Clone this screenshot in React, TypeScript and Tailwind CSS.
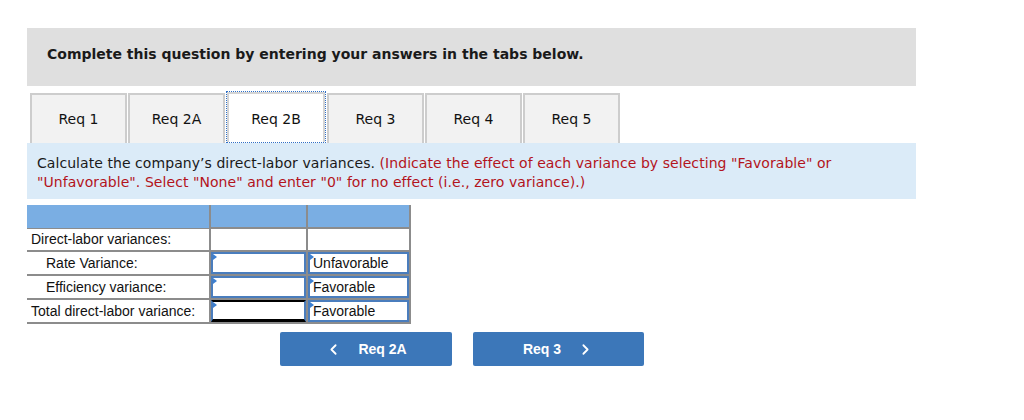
import { ChevronLeft, ChevronRight } from "lucide-react";

const tabs = ["Req 1", "Req 2A", "Req 2B", "Req 3", "Req 4", "Req 5"];
const ACTIVE = 2;

const rows = [
  { label: "Direct-labor variances:", indent: false, kind: "plain" as const },
  { label: "Rate Variance:", indent: true, kind: "input" as const, effect: "Unfavorable" },
  { label: "Efficiency variance:", indent: true, kind: "input" as const, effect: "Favorable" },
  { label: "Total direct-labor variance:", indent: false, kind: "total" as const, effect: "Favorable" },
];

function Flag() {
  return (
    <span className="absolute left-0 top-0 w-0 h-0 border-y-[3px] border-y-transparent border-l-[4px] border-l-[#3c7fd0]" />
  );
}

export default function App() {
  return (
    <div className="w-[1024px] h-[420px] bg-white pl-[27px] pt-[28px] font-['DejaVu_Sans',Verdana,sans-serif]">
      <div className="w-[889px]">
        {/* question header */}
        <div className="h-[58px] bg-[#dfdfdf] flex items-center pl-5 pb-[5px]">
          <p className="text-[14px] font-bold text-[#1a1a1a]">
            Complete this question by entering your answers in the tabs below.
          </p>
        </div>

        {/* tabs */}
        <div className="flex items-end gap-[1px] ml-[3px] mt-[5px] h-[52px]">
          {tabs.map((t, i) =>
            i === ACTIVE ? (
              <div
                key={t}
                className="w-[100px] h-[52px] bg-white border border-dotted border-[#2f6fc6] text-[14px] text-[#111]"
              >
                <div className="w-full h-full border-x-2 border-t-2 border-[#d4d4d4] flex items-center justify-center pt-[3px]">
                  {t}
                </div>
              </div>
            ) : (
              <div
                key={t}
                className="w-[97px] h-[50px] bg-[#f2f2f2] border-x-2 border-t-2 border-[#cdcdcd] flex items-center justify-center text-[14px] text-[#111]"
              >
                {t}
              </div>
            ),
          )}
        </div>

        {/* instructions */}
        <div className="bg-[#dbebf8] pl-[10px] pr-4 pt-[11px] pb-[7px] text-[14px] leading-[19px] tracking-[0.06px] text-[#1a1a1a]">
          Calculate the company’s direct-labor variances.{" "}
          <span className="text-[#b3141c]">
            (Indicate the effect of each variance by selecting "Favorable" or "Unfavorable". Select "None" and
            enter "0" for no effect (i.e., zero variance).)
          </span>
        </div>

        {/* table */}
        <table className="mt-[6px] border-collapse font-['Liberation_Sans',Arial,sans-serif] text-[14px] text-[#111]">
          <tbody>
            <tr className="h-[23px] bg-[#7aaee3]">
              <td className="w-[183px] p-0" />
              <td className="w-[97px] p-0 border-x-2 border-[#8c8c8c]" />
              <td className="w-[103px] p-0 border-r-2 border-[#8c8c8c]" />
            </tr>
            {rows.map((r) => (
              <tr key={r.label} className="h-[23px] border-b-2 border-[#8c8c8c]">
                <td className={`p-0 leading-[20px] border-t border-[#8c8c8c] ${r.indent ? "pl-[19px]" : "pl-[4px]"}`}>{r.label}</td>
                {r.kind === "plain" ? (
                  <>
                    <td className="p-0 border-x-2 border-t-2 border-[#8c8c8c]" />
                    <td className="p-0 border-r-2 border-t-2 border-[#8c8c8c]" />
                  </>
                ) : (
                  <>
                    <td className="p-0 border-x-2 border-[#8c8c8c]">
                      <div
                        className={`relative h-[22px] border-2 border-[#4a7dbd] bg-white ${
                          r.kind === "total" ? "border-t-black border-b-[3px] border-b-black" : ""
                        }`}
                      >
                        <Flag />
                      </div>
                    </td>
                    <td className="p-0 border-r-2 border-[#8c8c8c]">
                      <div className="relative h-[22px] border-2 border-[#4a7dbd] bg-white pl-[3px] leading-[18px]">
                        <Flag />
                        {r.effect}
                      </div>
                    </td>
                  </>
                )}
              </tr>
            ))}
          </tbody>
        </table>

        {/* navigation */}
        <div className="flex gap-[21px] ml-[253px] mt-[8px] font-['Liberation_Sans',Arial,sans-serif]">
          <button className="w-[172px] h-[34px] rounded-[2px] bg-[#3c77b9] text-white text-[14px] font-bold flex items-center justify-center gap-[16px]">
            <ChevronLeft size={17} strokeWidth={2.5} />
            <span>Req 2A</span>
          </button>
          <button className="w-[171px] h-[34px] rounded-[2px] bg-[#3c77b9] text-white text-[14px] font-bold flex items-center justify-center gap-[16px]">
            <span>Req 3</span>
            <ChevronRight size={17} strokeWidth={2.5} />
          </button>
        </div>
      </div>
    </div>
  );
}
